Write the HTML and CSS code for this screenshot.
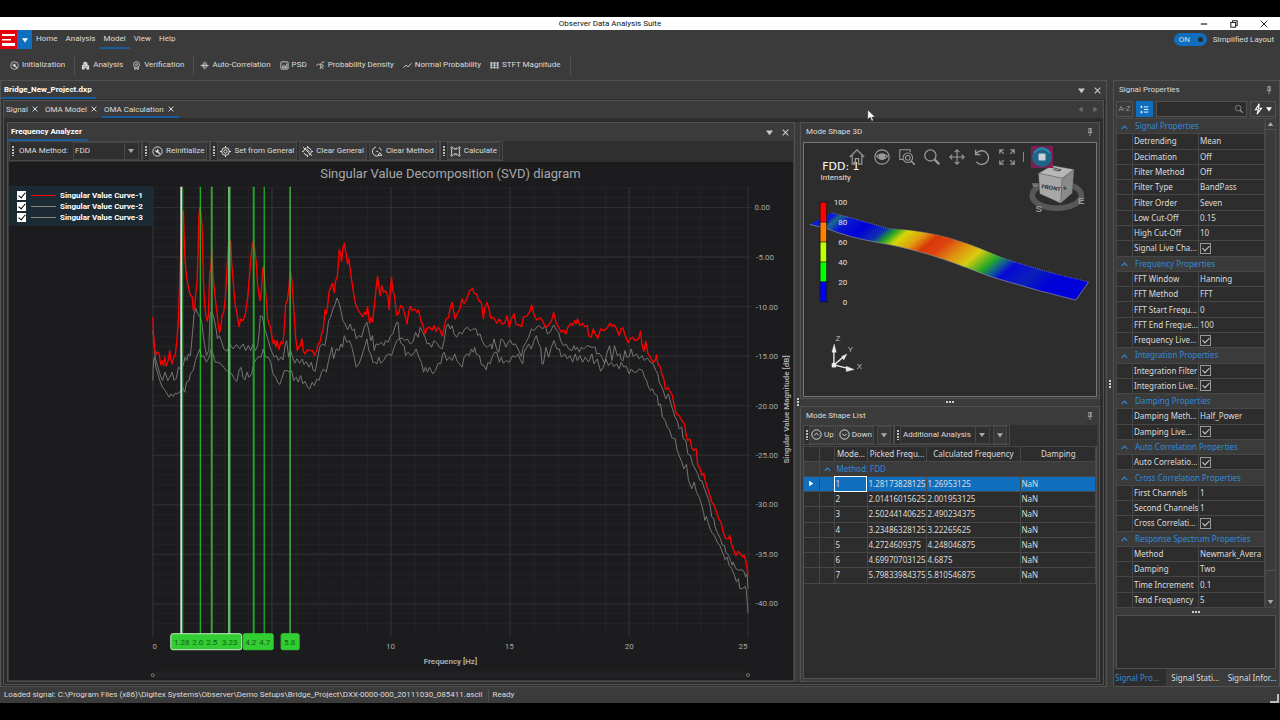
FILE: index.html
```html
<!DOCTYPE html>
<html lang="en">
<head>
    <meta charset="utf-8">
    <title>Observer Data Analysis Suite</title>
    <link rel="stylesheet" href="styles.css">
</head>
<body>
    <!-- Shared icons -->
    <svg class="defs" width="0" height="0">
        <symbol id="i-wrench" viewBox="0 0 20 20"><circle cx="10" cy="10" r="8.5" fill="none" stroke="currentColor" stroke-width="1.7"/><path d="M15 15 9.5 9.5" stroke="currentColor" stroke-width="2.5"/><path d="M6 6v4l2 2h3l1-2V7l-2-2-1 3-2 0z" fill="currentColor"/></symbol>
        <symbol id="i-building" viewBox="0 0 20 20"><path d="M2 19V9h3V4l4-3 5 3v4l4 2v9h-6v-4H8v4z" fill="currentColor"/><path d="M7 7h4M4 12h12" stroke="#3b3b3b" stroke-width="1.500" stroke-dasharray="2 1.500"/></symbol>
        <symbol id="i-badge" viewBox="0 0 20 20"><g fill="none" stroke="currentColor" stroke-width="1.800"><circle cx="10" cy="8" r="6.500"/><circle cx="10" cy="8" r="2"/><path d="M6 13v6l4-2 4 2v-6"/></g></symbol>
        <symbol id="i-wave" viewBox="0 0 20 20"><path d="M1 10h18M5 7v6M8 3v14M11 1v18M14 4v12M17 8v4" stroke="currentColor" stroke-width="1.500"/></symbol>
        <symbol id="i-psd" viewBox="0 0 20 20"><g fill="none" stroke="currentColor" stroke-width="1.800"><rect x="2" y="2" width="16" height="16" rx="1"/><path d="M6 14v-4M9 14V8M12 14v-3M15 14V6M5 15h11"/></g></symbol>
        <symbol id="i-density" viewBox="0 0 20 20"><g fill="none" stroke="currentColor" stroke-width="1.700"><path d="m1 11 4-5 4 3 4-6 6-1"/><circle cx="13" cy="11" r="3"/><path d="m9 18 2-5m3 2 2 3"/></g></symbol>
        <symbol id="i-line" viewBox="0 0 20 20"><path d="m1 15 6-6 4 4 8-8" fill="none" stroke="currentColor" stroke-width="2"/></symbol>
        <symbol id="i-grid" viewBox="0 0 20 20"><path d="M3 2v16M10 2v16M17 2v16" stroke="currentColor" stroke-width="4" stroke-dasharray="4 1"/><path d="M3 6h14M3 14h14" stroke="currentColor"/></symbol>
        <symbol id="i-target" viewBox="0 0 20 20"><g fill="none" stroke="currentColor" stroke-width="1.800"><circle cx="10" cy="10" r="7"/><circle cx="10" cy="10" r="3"/><path d="M10 0v4M10 16v4M0 10h4M16 10h4"/></g></symbol>
        <symbol id="i-notarget" viewBox="0 0 20 20"><g fill="none" stroke="currentColor" stroke-width="1.800"><circle cx="10" cy="10" r="7" stroke-dasharray="8 3"/><path d="m2 2 16 16M10 0v4M10 16v4M0 10h3M17 10h3M8 5l6 6"/></g></symbol>
        <symbol id="i-clear" viewBox="0 0 20 20"><g fill="none" stroke="currentColor" stroke-width="1.800"><path d="M7 2a8 8 0 0 0 4 16M13 3a8 8 0 0 1 4 5M8 10h3M11 17l3-5 4 5z"/></g></symbol>
        <symbol id="i-calc" viewBox="0 0 20 20"><g fill="none" stroke="currentColor" stroke-width="1.700"><circle cx="3" cy="3" r="1.500"/><circle cx="17" cy="3" r="1.500"/><circle cx="3" cy="17" r="1.500"/><circle cx="17" cy="17" r="1.500"/><path d="M3 5v10M17 5v10M6 4h3v3M14 4h-3v3M6 16h3v-3M14 16h-3v-3"/></g></symbol>
        <symbol id="i-up" viewBox="0 0 20 20"><g fill="none" stroke="currentColor" stroke-width="1.800"><circle cx="10" cy="10" r="8.500"/><path d="m6 11.500 4-4 4 4"/></g></symbol>
        <symbol id="i-down" viewBox="0 0 20 20"><g fill="none" stroke="currentColor" stroke-width="1.800"><circle cx="10" cy="10" r="8.500"/><path d="m6 8.500 4 4 4-4"/></g></symbol>
        <symbol id="i-x" viewBox="0 0 10 10"><path d="m1 1 8 8M9 1 1 9" fill="none" stroke="currentColor" stroke-width="1.600"/></symbol>
        <symbol id="i-tri" viewBox="0 0 10 10"><path d="M0 2h10L5 9z" fill="currentColor"/></symbol>
        <symbol id="i-pin" viewBox="0 0 10 14"><path d="M2 1h6M3 1v7M7 1v7M6 1v7M1 8h8M5 8v6" fill="none" stroke="currentColor" stroke-width="1.400"/></symbol>
        <symbol id="i-home" viewBox="0 0 20 20"><path d="m1 10 9-9 9 9M4 8v11h4v-7h4v7h4V8" fill="none" stroke="currentColor" stroke-width="1.500"/></symbol>
        <symbol id="i-eye" viewBox="0 0 20 20"><circle cx="10" cy="10" r="9" fill="none" stroke="currentColor" stroke-width="1.500"/><path d="M3 9q7-5 14 0-7 8-14 0" fill="none" stroke="currentColor" stroke-width="1.500"/><circle cx="10" cy="9.500" r="4" fill="currentColor"/></symbol>
        <symbol id="i-zoombox" viewBox="0 0 20 20"><g fill="none" stroke="currentColor" stroke-width="1.300"><path d="M5 13H1V1h13v3"/><circle cx="11" cy="11" r="6"/><circle cx="11" cy="11" r="3"/><path d="m15 15 5 5" stroke-width="2"/></g></symbol>
        <symbol id="i-search" viewBox="0 0 20 20"><g fill="none" stroke="currentColor"><circle cx="8" cy="8" r="7" stroke-width="1.600"/><path d="m13 13 6 6" stroke-width="3"/></g></symbol>
        <symbol id="i-move" viewBox="0 0 20 20"><path d="M10 1v18M1 10h18M7 4l3-3 3 3M7 16l3 3 3-3M4 7l-3 3 3 3M16 7l3 3-3 3" fill="none" stroke="currentColor" stroke-width="1.400"/></symbol>
        <symbol id="i-rotate" viewBox="0 0 20 20"><path d="M2 1v6h6M2 7a8.500 8.500 0 1 1 1 9" fill="none" stroke="currentColor" stroke-width="1.700"/></symbol>
        <symbol id="i-expand" viewBox="0 0 20 20"><path d="M1 6V1h5M1 1l5 5M14 1h5v5M19 1l-5 5M1 14v5h5M1 19l5-5M14 19h5v-5M19 19l-5-5" fill="none" stroke="currentColor" stroke-width="1.500"/></symbol>
        <symbol id="i-stop" viewBox="0 0 22 22"><path d="M0 0h22v22H0z" fill="#7c1f52"/><circle cx="11" cy="11" r="10" fill="#1d6687"/><path d="M3 7q8-9 16 0" fill="none" stroke="#2b88ae" stroke-width="2"/><rect x="7.500" y="7.500" width="7" height="7" rx="1" fill="#c9d3d8"/></symbol>
        <symbol id="i-bolt" viewBox="0 0 12 16"><path d="M7 1 2 9h4l-2 6 6-8H6z" fill="none" stroke="currentColor" stroke-width="1.500"/></symbol>
        <symbol id="i-cats" viewBox="0 0 14 14"><path d="M6 3h7M6 7h7M6 11h7M4 3H1M4 11H1M2 1v4M2 9v4" fill="none" stroke="currentColor" stroke-width="1.400"/></symbol>
        <symbol id="i-chev" viewBox="0 0 10 10"><path d="m1 7 4-4 4 4" fill="none" stroke="currentColor" stroke-width="1.600"/></symbol>
    </svg>

    <header class="titlebar">
        <span class="title">Observer Data Analysis Suite</span>
        <div class="window-buttons">
            <button aria-label="Minimize"><svg viewBox="0 0 10 10"><path d="M1 5h8" stroke="#222" stroke-width="1.500"/></svg></button>
            <button aria-label="Restore"><svg viewBox="0 0 10 10"><path d="M1 3h6v6H1zM3 3V1h6v6H7" fill="none" stroke="#222" stroke-width="1.300"/></svg></button>
            <button aria-label="Close"><svg viewBox="0 0 10 10"><path d="m1 1 8 8M9 1 1 9" stroke="#222" stroke-width="1.200"/></svg></button>
        </div>
    </header>

    <nav class="menu">
        <button class="logo" aria-label="Application menu">
            <svg class="logo-mark" viewBox="0 0 17 19"><path d="M0 0h17v19H0z" fill="#e8000b"/><path d="M2 4h13v2H2zM2 9h9v1.500H2zM2 13h13v3H2z" fill="#fff"/></svg>
            <svg class="logo-arrow"><use href="#i-tri"/></svg>
        </button>
        <a href="#">Home</a>
        <a href="#">Analysis</a>
        <a href="#" class="active">Model</a>
        <a href="#">View</a>
        <a href="#">Help</a>
        <label class="toggle"><input type="checkbox" checked><span class="switch">ON</span>Simplified Layout</label>
    </nav>

    <div class="ribbon">
        <button><svg><use href="#i-wrench"/></svg>Initialization</button>
        <i class="sep"></i>
        <button><svg><use href="#i-building"/></svg>Analysis</button>
        <button><svg><use href="#i-badge"/></svg>Verification</button>
        <i class="sep"></i>
        <button><svg><use href="#i-wave"/></svg>Auto-Correlation</button>
        <button><svg><use href="#i-psd"/></svg>PSD</button>
        <button><svg><use href="#i-density"/></svg>Probability Density</button>
        <button><svg><use href="#i-line"/></svg>Normal Probability</button>
        <button><svg><use href="#i-grid"/></svg>STFT Magnitude</button>
        <i class="sep"></i>
    </div>

    <main class="workspace">
        <section class="document">
            <div class="doc-head">
                <h1>Bridge_New_Project.dxp</h1>
                <button class="push" aria-label="Documents"><svg><use href="#i-tri"/></svg></button>
                <button aria-label="Close document"><svg><use href="#i-x"/></svg></button>
            </div>
            <div class="inner">
                <div class="tabs">
                    <div class="tab"><a href="#">Signal</a><button aria-label="Close Signal"><svg><use href="#i-x"/></svg></button></div>
                    <div class="tab"><a href="#">OMA Model</a><button aria-label="Close OMA Model"><svg><use href="#i-x"/></svg></button></div>
                    <div class="tab active"><a href="#">OMA Calculation</a><button aria-label="Close OMA Calculation"><svg><use href="#i-x"/></svg></button></div>
                    <span class="tab-arrows"><svg viewBox="0 0 10 10"><path d="M8 1v8L2 5z" fill="#6b6b6b"/></svg><svg viewBox="0 0 10 10"><path d="M2 1v8l6-4z" fill="#6b6b6b"/></svg></span>
                </div>
                <div class="panes">
                    <section class="pane analyzer">
                        <div class="pane-head">
                            <h2 class="active">Frequency Analyzer</h2>
                            <button class="push" aria-label="Panes"><svg><use href="#i-tri"/></svg></button>
                            <button aria-label="Close pane"><svg><use href="#i-x"/></svg></button>
                        </div>
                        <div class="toolbar">
                            <div class="group">
                                <i class="grip"></i>
                                <label for="method">OMA Method:</label>
                                <span class="combo method"><select id="method"><option>FDD</option></select></span>
                            </div>
                            <div class="group"><i class="grip"></i><button><svg><use href="#i-wrench"/></svg>Reinitialize</button></div>
                            <div class="group">
                                <i class="grip"></i>
                                <button><svg><use href="#i-target"/></svg>Set from General</button>
                                <button><svg><use href="#i-notarget"/></svg>Clear General</button>
                                <button><svg><use href="#i-clear"/></svg>Clear Method</button>
                            </div>
                            <div class="group"><i class="grip"></i><button><svg><use href="#i-calc"/></svg>Calculate</button></div>
                        </div>
                        <div class="chart">
                            <svg class="plot" viewBox="9 162 785 517">
                                <defs>
                                    <pattern id="minor" x="153" y="186.400" width="23.840" height="9.920" patternUnits="userSpaceOnUse"><path d="M0 0V10M0 0H24" stroke="#29292b"/></pattern>
                                    <pattern id="major" x="152.500" y="206.300" width="119.200" height="49.600" patternUnits="userSpaceOnUse"><path d="M.5 0V50M0 .5H120" stroke="#303032"/></pattern>
                                </defs>
                                <text x="451" y="177" class="chart-title">Singular Value Decomposition (SVD) diagram</text>
                                <rect x="153" y="186" width="596" height="447" fill="url(#minor)"/>
                                <rect x="152" y="186" width="600" height="451" fill="url(#major)"/>
                                <rect x="153" y="671" width="596" height="7" fill="#212123"/>

                                <!-- SVD curves, drawn on a third-of-a-pixel grid in three frequency bands -->
                                <g class="curves">
                                    <g transform="translate(140 180) scale(.33333)">
                                        <polyline class="s2" points="39,600 41,540 44,530 48,560 54,580 60,600 68,620 76,630 82,640 88,650 94,640 100,648 106,638 112,640 120,635 128,620 135,635 140,605 148,600 152,580 160,570 167,540 172,525 180,505 186,530 192,525 200,545 208,530 214,505 220,520 226,545 234,545 244,550 252,560 260,570 268,575 276,580 284,595 291,603 298,570 304,560 310,590 316,598 322,575 328,590 336,580 342,550 350,535 358,528 364,530 371,505 378,530 386,530 393,545 400,580 408,590 414,605 420,612 428,590 434,570 442,570 450,575 456,570 462,600 470,590 476,605 483,585 490,610 496,602 504,620 510,625 518,605 524,615 532,595 538,600 546,575 552,565 560,575 566,545 572,520 577,500 582,535 590,505 598,510 604,490 609,500 614,465 622,485 630,480 637,500 644,530 650,560 658,550 664,535 672,510 682,475 688,510 694,520 700,545 706,545 712,550 718,530 724,548 732,540 740,525 748,520 756,525 764,500 772,480 780,475 786,490 794,495 798,525 806,515 814,525 822,520 830,505 838,530 846,545 852,575 858,560 864,575 870,560 880,580 888,570 896,548 904,550 910,520 914,515 922,540 930,530 938,540 946,520 952,540 960,550"/>
                                        <polyline class="s2" points="39,450 43,490 46,530 53,555 60,580 68,600 76,575 84,600 90,590 97,575 103,600 110,592 116,560 123,565 130,555 136,530 141,540 146,520 152,525 158,460 163,400 168,383 174,400 182,410 187,430 191,470 196,500 200,525 207,510 211,400 216,392 222,410 229,445 233,475 239,465 246,485 252,505 262,512 270,490 280,505 290,492 300,505 310,490 318,510 326,495 333,510 340,490 347,510 354,495 358,460 362,405 368,408 374,440 380,460 386,480 391,500 397,515 404,530 410,525 416,540 424,530 430,538 437,490 441,480 447,530 453,510 459,530 465,548 472,535 480,548 488,535 493,552 500,543 508,560 515,545 521,570 527,572 533,540 540,500 548,490 556,495 562,460 567,420 573,410 580,385 587,370 592,352 598,365 604,390 610,420 617,430 624,448 632,430 638,450 644,445 650,475 658,465 666,470 674,440 682,425 688,450 694,480 699,465 704,510 710,490 718,492 726,485 733,495 738,480 746,485 752,468 760,460 766,440 772,425 776,426 780,475 788,472 796,480 804,475 812,490 820,485 828,455 836,470 842,440 850,455 857,470 863,490 870,488 876,500 884,480 893,488 900,500 908,505 914,480 920,440 926,430 932,445 938,435 944,460 952,470 960,455"/>
                                        <polyline class="s1" points="39,410 41,455 44,500 48,522 53,514 58,520 63,553 67,540 71,555 75,530 79,556 84,545 90,510 93,535 97,550 102,532 107,520 112,470 116,420 120,290 123,205 127,95 131,92 134,200 136,240 140,290 146,320 152,345 157,348 161,390 165,378 168,340 172,300 175,220 177,110 180,80 184,100 187,140 189,220 191,300 194,360 198,405 203,422 206,400 210,275 213,268 216,205 220,290 226,350 231,390 235,425 239,457 243,440 247,405 252,395 257,350 261,280 264,230 267,182 273,182 276,250 281,310 286,370 292,400 298,438 303,415 310,420 317,400 324,350 329,290 334,230 338,190 341,182 346,210 350,250 354,315 361,360 365,330 369,265 372,258 376,310 381,370 384,415 388,430 393,440 397,470 401,490 405,480 409,500 412,480 418,507 424,483 430,490 434,440 438,370 443,360 447,330 452,270 457,300 460,350 464,410 468,470 473,510 478,498 482,495 487,475 491,512 496,520 503,508 510,510 518,510 525,524 531,510 536,490 541,485 546,460 551,445 556,388 560,400 564,375 568,335 573,322 578,308 584,335 588,300 593,290 597,240 599,206 603,218 606,242 610,200 614,188 619,215 624,250 628,235 633,275 638,310 644,350 649,375 656,388 663,400 670,408 675,395 680,402 684,377 690,428 694,410 699,425 704,380 710,320 714,287 718,320 722,345 727,315 732,335 738,330 745,345 749,388 753,320 756,290 760,330 765,345 771,403 777,400 783,375 790,380 797,405 803,430 808,390 813,377 818,390 825,385 832,395 837,388 844,420 849,430 853,445 857,460 862,443 870,440 878,448 884,435 890,452 897,440 903,450 908,466 914,440 920,415 927,412 932,385 938,365 942,390 947,415 953,400 960,388"/>
                                    </g>
                                    <g transform="translate(460 220) scale(.33333)">
                                        <polyline class="s2" points="0,430 8,440 14,410 22,400 30,405 36,385 42,395 46,380 50,400 60,405 66,432 74,435 80,448 86,425 92,430 100,405 106,395 112,395 120,425 126,410 132,428 140,420 150,425 160,405 168,410 176,400 184,420 190,430 194,395 200,385 208,370 216,385 224,360 231,345 238,370 244,380 248,430 252,430 260,380 268,410 276,380 284,360 292,385 300,385 306,410 316,400 324,415 332,405 340,425 348,400 354,420 362,405 370,425 378,410 388,425 398,400 404,430 414,415 424,452 432,440 440,415 448,435 456,425 464,438 472,430 480,445 486,425 494,440 500,435 510,460 516,445 524,455 532,455 540,445 550,450 556,470 562,480 568,500 574,510 580,505 586,520 594,525 598,555 604,550 610,590 618,600 624,620 630,625 638,652 648,655 654,690 660,705 668,725 674,745 682,732 688,780"/>
                                        <polyline class="s2" points="0,335 8,340 16,325 24,320 32,330 42,325 50,325 55,345 62,340 68,360 76,375 84,380 94,370 98,385 104,355 112,385 118,395 125,355 132,360 140,380 146,365 152,358 160,372 168,370 176,385 186,408 192,380 200,365 208,350 216,325 224,330 232,320 240,315 250,325 258,315 264,340 272,335 283,313 292,330 298,335 304,360 312,375 320,370 328,385 338,390 344,375 348,388 354,380 360,395 366,380 374,385 384,375 396,380 408,380 412,400 420,398 428,410 436,428 444,395 451,375 458,420 466,375 474,405 482,400 486,418 492,420 497,390 503,410 510,408 516,385 522,408 532,400 540,415 548,405 556,420 564,412 574,425 582,430 590,450 596,460 600,485 606,495 612,510 620,535 628,520 634,545 640,565 648,590 654,600 660,625 668,620 672,655 680,660 686,700 694,705 700,730 710,750 716,760 722,780 728,780"/>
                                        <polyline class="s1" points="0,270 8,235 14,250 22,235 30,212 40,203 44,218 52,220 58,240 66,245 72,295 76,262 83,245 88,262 94,292 104,292 112,308 120,295 128,310 136,308 143,285 150,320 156,295 164,280 170,312 178,312 187,318 193,288 202,287 212,272 217,253 224,282 232,298 242,292 250,300 258,320 264,318 272,308 277,300 283,275 290,305 298,320 306,335 312,328 319,340 326,320 334,308 340,315 346,300 350,310 355,295 362,315 370,308 376,318 384,315 388,345 396,350 402,325 408,340 416,353 424,325 434,330 444,322 452,308 458,318 464,312 472,325 480,345 485,325 491,322 498,345 506,366 513,355 520,350 528,360 538,355 544,332 548,370 554,392 560,362 566,398 574,412 582,425 588,420 592,402 596,430 604,440 608,460 614,475 619,507 626,500 634,515 640,525 646,560 652,580 660,585 668,600 676,610 682,650 686,660 692,655 698,682 704,690 711,685 716,735 722,742 728,765 734,758 738,780"/>
                                    </g>
                                    <g transform="translate(640 480) scale(.33333)">
                                        <polyline class="s2" points="148,0 158,25 165,5 172,35 182,55 188,75 194,100 197,120 202,108 208,130 215,150 220,160 226,165 234,185 242,195 250,215 258,238 264,230 270,255 278,265 286,285 292,305 298,295 302,325 310,325 318,318 322,330 325,370 327,398"/>
                                        <polyline class="s2" points="188,0 196,25 204,45 212,70 218,110 224,115 228,140 236,160 244,175 250,195 256,195 260,215 268,225 274,240 280,255 282,245 290,265 298,270 306,268 314,272 320,290 324,280 327,325"/>
                                        <polyline class="s1" points="198,0 206,25 212,45 218,65 224,72 232,95 240,118 247,128 252,155 260,175 268,175 272,165 277,190 284,210 291,226 297,213 304,220 310,230 315,225 320,240 324,265 327,282"/>
                                    </g>
                                </g>

                                <!-- Picked frequencies -->
                                <g class="picks">
                                    <path d="M181.500 186V634" stroke="#d8d8d8" stroke-width="2"/>
                                    <path d="M183 186V634" stroke="#2f9a36"/>
                                    <path d="M200.500 186V634" stroke="#22dd28"/>
                                    <path d="M212 186V634" stroke="#3d9c3f" stroke-width="2"/>
                                    <path d="M229.500 186V634" stroke="#62b865" stroke-width="2.500"/>
                                    <path d="M254 186V634" stroke="#25a32b" stroke-width="2"/>
                                    <path d="M264.500 186V634" stroke="#22dd28"/>
                                    <path d="M290.500 186V634" stroke="#3fae42" stroke-width="1.500"/>
                                </g>
                                <g fill="#32cd32" stroke="#32cd32">
                                    <path d="M173 633.500h67q2 0 2 2v12q0 2-2 2h-67q-2 0-2-2v-12q0-2 2-2z" stroke="#c9efc9"/>
                                    <rect x="243.500" y="633.500" width="30" height="16" rx="1.500"/>
                                    <rect x="281.500" y="633.500" width="18" height="16" rx="1.500"/>
                                </g>
                                <g class="pick-labels">
                                    <text x="182" y="645">1.28</text><text x="198" y="645">2.0</text><text x="212" y="645">2.5</text><text x="230" y="645">3.23</text>
                                    <text x="251" y="645">4.2</text><text x="265" y="645">4.7</text><text x="290" y="645">5.8</text>
                                </g>

                                <g class="axis">
                                    <text x="155" y="649">0</text><text x="391" y="649">10</text><text x="510" y="649">15</text><text x="630" y="649">20</text><text x="744" y="649">25</text>
                                </g>
                                <g class="axis y-axis">
                                    <text x="771" y="209">0.00</text><text x="775" y="259">-5.00</text><text x="779" y="309">-10.00</text><text x="779" y="358">-15.00</text><text x="779" y="408">-20.00</text><text x="779" y="458">-25.00</text><text x="779" y="507">-30.00</text><text x="779" y="557">-35.00</text><text x="779" y="606">-40.00</text>
                                </g>
                                <text class="axis-title" x="451" y="664">Frequency [Hz]</text>
                                <text class="axis-title" transform="translate(790 409) rotate(-90)">Singular Value Magnitude [dB]</text>
                                <g fill="none" stroke="#777"><circle cx="153" cy="675" r="1.500"/><circle cx="749" cy="675" r="1.500"/></g>
                            </svg>
                            <div class="legend">
                                <label><input type="checkbox" checked><i class="red"></i>Singular Value Curve-1</label>
                                <label><input type="checkbox" checked><i></i>Singular Value Curve-2</label>
                                <label><input type="checkbox" checked><i></i>Singular Value Curve-3</label>
                            </div>
                        </div>
                    </section>

                    <div class="splitter vertical"><i></i></div>

                    <div class="side">
                        <section class="pane shape">
                            <div class="pane-head"><h2>Mode Shape 3D</h2><button class="push pin" aria-label="Pin"><svg><use href="#i-pin"/></svg></button></div>
                            <div class="viewport">
                                <svg class="scene" viewBox="15 9 879 756">
                                    <defs>
                                        <linearGradient id="heat" gradientUnits="userSpaceOnUse" x1="154" y1="185" x2="570" y2="685">
                                            <stop offset="0" stop-color="#0a1ed0"/><stop offset=".02" stop-color="#1c6a8a"/><stop offset=".06" stop-color="#0818d0"/><stop offset=".13" stop-color="#0000d8"/><stop offset=".2" stop-color="#1030b0"/>
                                            <stop offset=".235" stop-color="#1fa02a"/><stop offset=".275" stop-color="#d4d808"/><stop offset=".33" stop-color="#e0a010"/><stop offset=".38" stop-color="#d83808"/><stop offset=".43" stop-color="#dc4410"/>
                                            <stop offset=".49" stop-color="#e08a10"/><stop offset=".56" stop-color="#d8cc10"/><stop offset=".63" stop-color="#28a828"/><stop offset=".67" stop-color="#106090"/><stop offset=".71" stop-color="#0808d8"/>
                                            <stop offset=".8" stop-color="#0a20b8"/><stop offset=".88" stop-color="#0000d8"/>
                                        </linearGradient>
                                    </defs>
                                    <path d="M32 252 98 217Q180 238 270 265C400 272 480 295 610 352Q740 396 872 425L833 480Q720 452 620 422C520 395 430 340 235 306Q150 291 85 265z" fill="url(#heat)"/>
                                    <path d="M98 217Q180 238 270 265C400 272 480 295 610 352Q740 396 872 425" fill="none" stroke="#aaa" stroke-width="2" stroke-dasharray="3 4"/>
                                    <path d="M872 425 833 480Q720 452 620 422C520 395 430 340 235 306Q150 291 85 265L32 252" fill="none" stroke="#999" stroke-width="2"/>
                                    <path d="M64 185h19v60H64z" fill="#f00"/><path d="M64 245h19v60H64z" fill="#ff8000"/><path d="M64 305h19v60H64z" fill="#bfff00"/><path d="M64 365h19v60H64z" fill="#0f0"/><path d="M64 425h19v60H64z" fill="#00f"/>
                                    <path d="M63 185h27M63 245h27M63 305h27M63 365h27M63 425h27M63 485h27M63 185v300M83 185v300" stroke="#111" stroke-width="2"/>
                                    <text x="70" y="87" class="shape-name">FDD: 1</text>
                                    <text x="65" y="119">Intensity</text>
                                    <g text-anchor="end"><text x="145" y="195">100</text><text x="145" y="255">80</text><text x="145" y="315">60</text><text x="145" y="375">40</text><text x="145" y="435">20</text><text x="145" y="495">0</text></g>
                                    <!-- View cube -->
                                    <ellipse cx="776" cy="165" rx="74" ry="38" fill="none" stroke="#585858" stroke-width="17"/>
                                    <g class="compass"><text x="712" y="214">S</text><text x="840" y="190">E</text><text x="702" y="138" class="far">W</text></g>
                                    <g stroke="#555"><path d="m721 98 41-23 66 12-36 26z" fill="#b8b8b8"/><path d="m721 98 71 15-4 75-63-28z" fill="#a8a8a8"/><path d="m792 113 36-26-6 71-34 30z" fill="#8a8a8a"/></g>
                                    <g class="cube-text"><text transform="translate(729 143) rotate(9)">FRONT</text><text transform="translate(762 89) rotate(12)" class="small">TOP</text><text transform="translate(799 149) rotate(-35)" class="small">R</text></g>
                                    <!-- Axis triad -->
                                    <g fill="#eee" stroke="#eee" stroke-width="4"><path d="M105 675v-50M105 675l30-25M105 675l45 11"/><path d="m99 637 7-25 6 25zM128 650l16-8-9 18zM142 679l24 10-24 6zM99 670h12v12H99z" stroke-width="1"/></g>
                                    <g class="triad"><text x="110" y="604">Z</text><text x="147" y="636">Y</text><text x="174" y="688">X</text></g>
                                </svg>
                                <div class="view-tools">
                                    <button aria-label="Home"><svg><use href="#i-home"/></svg></button>
                                    <button aria-label="View"><svg><use href="#i-eye"/></svg></button>
                                    <button aria-label="Zoom window"><svg><use href="#i-zoombox"/></svg></button>
                                    <button aria-label="Zoom"><svg><use href="#i-search"/></svg></button>
                                    <button aria-label="Pan"><svg><use href="#i-move"/></svg></button>
                                    <button aria-label="Rotate"><svg><use href="#i-rotate"/></svg></button>
                                    <button aria-label="Fit"><svg><use href="#i-expand"/></svg></button>
                                    <i></i>
                                    <button class="stop" aria-label="Stop"><svg><use href="#i-stop"/></svg></button>
                                </div>
                            </div>
                        </section>
                        <div class="splitter horizontal"><i></i></div>
                        <section class="pane list">
                            <div class="pane-head"><h2>Mode Shape List</h2><button class="push pin" aria-label="Pin"><svg><use href="#i-pin"/></svg></button></div>
                            <div class="toolbar">
                                <div class="group">
                                    <i class="grip"></i>
                                    <button><svg><use href="#i-up"/></svg>Up</button>
                                    <button><svg><use href="#i-down"/></svg>Down</button>
                                    <button class="more" aria-label="More"><svg><use href="#i-tri"/></svg></button>
                                </div>
                                <div class="group">
                                    <i class="grip"></i>
                                    <span class="combo analysis"><select aria-label="Analysis"><option>Additional Analysis</option></select></span>
                                    <button class="more" aria-label="More"><svg><use href="#i-tri"/></svg></button>
                                </div>
                            </div>
                            <div class="modes-box">
                                <table class="modes">
                                    <colgroup><col class="c-mark"><col class="c-mark"><col class="c-mode"><col class="c-picked"><col class="c-calc"><col></colgroup>
                                    <thead><tr><th></th><th></th><th>Mode...</th><th>Picked Frequ...</th><th>Calculated Frequency</th><th>Damping</th></tr></thead>
                                    <tbody>
                                        <tr class="method"><td></td><td colspan="5"><svg><use href="#i-chev"/></svg>Method: FDD</td></tr>
                                        <tr class="selected"><td><svg viewBox="0 0 10 10"><path d="M3 1v8l6-4z" fill="#fff"/></svg></td><td></td><td>1</td><td>1.28173828125</td><td>1.26953125</td><td>NaN</td></tr>
                                        <tr><td></td><td></td><td>2</td><td>2.01416015625</td><td>2.001953125</td><td>NaN</td></tr>
                                        <tr><td></td><td></td><td>3</td><td>2.50244140625</td><td>2.490234375</td><td>NaN</td></tr>
                                        <tr><td></td><td></td><td>4</td><td>3.23486328125</td><td>3.22265625</td><td>NaN</td></tr>
                                        <tr><td></td><td></td><td>5</td><td>4.2724609375</td><td>4.248046875</td><td>NaN</td></tr>
                                        <tr><td></td><td></td><td>6</td><td>4.69970703125</td><td>4.6875</td><td>NaN</td></tr>
                                        <tr><td></td><td></td><td>7</td><td>5.79833984375</td><td>5.810546875</td><td>NaN</td></tr>
                                    </tbody>
                                </table>
                            </div>
                        </section>
                    </div>
                </div>
            </div>
        </section>

        <div class="splitter vertical outer"><i></i></div>

        <aside class="properties">
            <div class="pane-head"><h2>Signal Properties</h2><button class="push pin" aria-label="Pin"><svg><use href="#i-pin"/></svg></button></div>
            <div class="prop-tools">
                <button class="az">A-Z</button>
                <button class="cats" aria-label="Categorized"><svg><use href="#i-cats"/></svg></button>
                <span class="search"><input type="text" aria-label="Search"><svg><use href="#i-search"/></svg></span>
                <button class="bolt" aria-label="Actions"><svg><use href="#i-bolt"/></svg><svg class="arrow"><use href="#i-tri"/></svg></button>
            </div>
            <div class="grid">
                <table class="props">
                    <colgroup><col class="c-exp"><col class="c-name"><col></colgroup>
                    <tr class="cat"><th colspan="3"><svg><use href="#i-chev"/></svg>Signal Properties</th></tr>
                    <tr><td></td><td>Detrending</td><td>Mean</td></tr>
                    <tr><td></td><td>Decimation</td><td>Off</td></tr>
                    <tr><td></td><td>Filter Method</td><td>Off</td></tr>
                    <tr><td></td><td>Filter Type</td><td>BandPass</td></tr>
                    <tr><td></td><td>Filter Order</td><td>Seven</td></tr>
                    <tr><td></td><td>Low Cut-Off</td><td>0.15</td></tr>
                    <tr><td></td><td>High Cut-Off</td><td>10</td></tr>
                    <tr><td></td><td>Signal Live Cha...</td><td><input type="checkbox" aria-label="Signal Live Change" checked></td></tr>
                    <tr class="cat"><th colspan="3"><svg><use href="#i-chev"/></svg>Frequency Properties</th></tr>
                    <tr><td></td><td>FFT Window</td><td>Hanning</td></tr>
                    <tr><td></td><td>FFT Method</td><td>FFT</td></tr>
                    <tr><td></td><td>FFT Start Frequ...</td><td>0</td></tr>
                    <tr><td></td><td>FFT End Freque...</td><td>100</td></tr>
                    <tr><td></td><td>Frequency Live...</td><td><input type="checkbox" aria-label="Frequency Live" checked></td></tr>
                    <tr class="cat"><th colspan="3"><svg><use href="#i-chev"/></svg>Integration Properties</th></tr>
                    <tr><td></td><td>Integration Filter</td><td><input type="checkbox" aria-label="Integration Filter" checked></td></tr>
                    <tr><td></td><td>Integration Live...</td><td><input type="checkbox" aria-label="Integration Live" checked></td></tr>
                    <tr class="cat"><th colspan="3"><svg><use href="#i-chev"/></svg>Damping Properties</th></tr>
                    <tr><td></td><td>Damping Meth...</td><td>Half_Power</td></tr>
                    <tr><td></td><td>Damping Live...</td><td><input type="checkbox" aria-label="Damping Live" checked></td></tr>
                    <tr class="cat"><th colspan="3"><svg><use href="#i-chev"/></svg>Auto Correlation Properties</th></tr>
                    <tr><td></td><td>Auto Correlatio...</td><td><input type="checkbox" aria-label="Auto Correlation" checked></td></tr>
                    <tr class="cat"><th colspan="3"><svg><use href="#i-chev"/></svg>Cross Correlation Properties</th></tr>
                    <tr><td></td><td>First Channels</td><td>1</td></tr>
                    <tr><td></td><td>Second Channels</td><td>1</td></tr>
                    <tr><td></td><td>Cross Correlati...</td><td><input type="checkbox" aria-label="Cross Correlation" checked></td></tr>
                    <tr class="cat"><th colspan="3"><svg><use href="#i-chev"/></svg>Response Spectrum Properties</th></tr>
                    <tr><td></td><td>Method</td><td>Newmark_Avera</td></tr>
                    <tr><td></td><td>Damping</td><td>Two</td></tr>
                    <tr><td></td><td>Time Increment</td><td>0.1</td></tr>
                    <tr><td></td><td>Tend Frequency</td><td>5</td></tr>
                </table>
                <div class="scroll">
                    <svg viewBox="0 0 10 10"><path d="M1 8h8L5 2z" fill="#aaa"/></svg>
                    <i></i>
                    <svg viewBox="0 0 10 10"><path d="M1 2h8L5 8z" fill="#aaa"/></svg>
                </div>
            </div>
            <div class="splitter horizontal"><i></i></div>
            <div class="description"></div>
            <div class="bottom-tabs">
                <a href="#" class="active">Signal Pro...</a>
                <a href="#">Signal Stati...</a>
                <a href="#">Signal Infor...</a>
            </div>
        </aside>
    </main>

    <footer class="status">
        <span>Loaded signal: C:\Program Files (x86)\Digitex Systems\Observer\Demo Setups\Bridge_Project\DXX-0000-000_20111030_085411.ascii</span>
        <span>Ready</span>
        <svg class="resize" viewBox="0 0 9 9"><path d="M8 0v8H0" fill="none" stroke="#bbb" stroke-width="2"/></svg>
    </footer>

    <svg class="pointer" viewBox="0 0 10 16"><path d="M1 1v12l3-3 2 5 2-1-2-4h4z" fill="#fff" stroke="#222" stroke-width=".5"/></svg>
</body>
</html>
```

FILE: styles.css
```css
* {
    box-sizing: border-box;
}
body {
    margin: 0;
    padding: 17px 0;
    height: 100vh;
    display: flex;
    flex-direction: column;
    overflow: hidden;
    background: #000;
    color: #dcdcdc;
    font: 8px/12px Roboto, "Noto Sans", sans-serif;
}
button, select, input {
    margin: 0;
    padding: 0;
    border: none;
    background: none;
    color: inherit;
    font: inherit;
}
button {
    display: flex;
    align-items: center;
    white-space: nowrap;
}
a {
    color: inherit;
    text-decoration: none;
}
h1, h2 {
    margin: 0;
    font-size: 8px;
    font-weight: normal;
}
svg {
    display: block;
    flex: none;
}
.defs {
    position: absolute;
}
.push {
    margin-left: auto;
}

/* Title bar, menu, ribbon */
.titlebar {
    display: flex;
    align-items: center;
    height: 13px;
    padding-right: 12px;
    background: #fff;
    color: #111;
}
.title {
    flex: 1;
    padding-left: 20px;
    text-align: center;
}
.window-buttons {
    display: flex;
    gap: 22px;
}
.window-buttons svg {
    width: 8px;
    height: 8px;
}
.menu {
    display: flex;
    height: 19px;
    background: #3b3b3b;
}
.logo {
    width: 32px;
    background: #106ebe;
}
.logo-mark {
    width: 17px;
    height: 19px;
}
.logo-arrow {
    width: 6px;
    height: 6px;
    margin-left: 5px;
    color: #fff;
}
.menu a {
    padding: 3px 4px 0;
    border-bottom: 2px solid transparent;
}
.menu a.active {
    border-color: #185c9c;
}
.toggle {
    display: flex;
    align-items: center;
    gap: 6px;
    margin-left: auto;
    padding-right: 6px;
}
.toggle input {
    position: absolute;
    opacity: 0;
}
.switch {
    position: relative;
    width: 33px;
    height: 13px;
    padding-left: 5px;
    border-radius: 7px;
    background: #106ebe;
    line-height: 13px;
}
.switch::after {
    content: "";
    position: absolute;
    right: 4px;
    top: 4px;
    width: 5px;
    height: 5px;
    border-radius: 50%;
    background: #2b2b2b;
}
.ribbon {
    display: flex;
    align-items: center;
    gap: 9px;
    height: 31px;
    padding: 1px 0 0 10px;
    background: #3b3b3b;
}
.ribbon button {
    gap: 3px;
}
.ribbon svg {
    width: 9px;
    height: 9px;
}
.sep {
    width: 1px;
    height: 20px;
    margin-right: -3px;
    background: #515151;
}

/* Docking */
.workspace {
    flex: 1;
    min-height: 0;
    display: flex;
    background: #3b3b3b;
}
.document {
    flex: 1;
    min-width: 0;
    display: flex;
    flex-direction: column;
    padding: 0 2px 1px;
    border: 1px solid #525252;
}
.doc-head {
    display: flex;
    align-items: center;
    gap: 9px;
    height: 18px;
    margin-bottom: 1px;
    padding-right: 3px;
}
.doc-head h1 {
    align-self: stretch;
    margin-left: -2px;
    padding: 3px 4px 0 3px;
    border-bottom: 2px solid #185c9c;
    color: #fff;
    font-weight: bold;
}
.doc-head svg, .pane-head svg {
    width: 7px;
    height: 7px;
    color: #c8c8c8;
}
.inner {
    flex: 1;
    min-height: 0;
    display: flex;
    flex-direction: column;
    border: 1px solid #525252;
    outline: 1px solid #2b2b2b;
}
.tabs {
    display: flex;
    height: 17px;
}
.tab {
    display: flex;
    gap: 4px;
    padding: 0 5px 0 2px;
    line-height: 17px;
    border-bottom: 2px solid transparent;
}
.tab.active {
    border-color: #185c9c;
}
.tab svg {
    width: 6px;
    height: 6px;
}
.tab-arrows {
    display: flex;
    align-items: center;
    gap: 8px;
    margin-left: auto;
    padding-right: 4px;
}
.tab-arrows svg {
    width: 7px;
    height: 7px;
}
.panes {
    flex: 1;
    min-height: 0;
    display: flex;
    padding: 4px 3px 2px;
    background: #2d2d2d;
}
.pane {
    display: flex;
    flex-direction: column;
    min-height: 0;
    border: 1px solid #525252;
    background: #3b3b3b;
}
.analyzer {
    flex: 1;
    min-width: 0;
    padding: 0 1px 1px;
}
.pane-head {
    display: flex;
    align-items: center;
    gap: 9px;
    height: 18px;
    padding-right: 4px;
}
.pane-head h2 {
    align-self: stretch;
    padding: 3px 6px 0 3px;
    border-bottom: 2px solid transparent;
}
.pane-head h2.active {
    margin-left: -1px;
    border-color: #185c9c;
    color: #fff;
    font-weight: bold;
}
.pane-head .pin svg {
    width: 6px;
    height: 8px;
    color: #aaa;
}
.splitter {
    flex: none;
    display: flex;
    align-items: center;
    justify-content: center;
    background: #3b3b3b;
}
.splitter.vertical {
    width: 5px;
}
.splitter.outer {
    width: 6px;
}
.splitter.horizontal {
    height: 7px;
}
.splitter i {
    width: 2px;
    height: 8px;
    background: repeating-linear-gradient(#ccc 0 2px, transparent 2px 3px);
}
.splitter.horizontal i {
    width: 8px;
    height: 2px;
    background: repeating-linear-gradient(90deg, #ccc 0 2px, transparent 2px 3px);
}

/* Toolbars */
.toolbar {
    display: flex;
    height: 21px;
    background: #2f2f2f;
}
.group {
    display: flex;
    align-items: center;
    gap: 2px;
    height: 20px;
    padding: 0 2px;
    border: 1px solid #4a4a4a;
}
.grip {
    width: 2px;
    height: 10px;
    background: repeating-linear-gradient(#bbb 0 2px, transparent 2px 3px);
}
.group label {
    padding: 0 3px;
}
.group button {
    gap: 3px;
    height: 18px;
    padding: 0 2px;
    border: 1px solid #464646;
    background: #383838;
}
.group svg {
    width: 11px;
    height: 11px;
}
.group .more {
    padding: 0 3px;
}
.group .more svg {
    width: 6px;
    height: 6px;
    color: #aaa;
}
.combo {
    position: relative;
    border: 1px solid #444;
}
.combo select {
    display: block;
    width: 100%;
    height: 16px;
    padding-left: 1px;
    appearance: none;
}
.combo::after {
    content: "";
    position: absolute;
    right: 4px;
    top: 6px;
    border: 3px solid transparent;
    border-top: 4px solid #aaa;
    border-bottom: none;
    pointer-events: none;
}
.combo::before {
    content: "";
    position: absolute;
    right: 13px;
    top: 0;
    bottom: 0;
    width: 1px;
    background: #4a4a4a;
    pointer-events: none;
}
.method {
    width: 66px;
}
.analysis {
    width: 90px;
}
.analysis select {
    padding-left: 2px;
}
.list .group {
    gap: 1px;
    padding: 0 2px;
}
.list .group button {
    gap: 2px;
    padding: 0 1px;
}
.list .group .more {
    margin-left: 2px;
    padding: 0 3px;
}

/* Chart */
.chart {
    position: relative;
    flex: 1;
    min-height: 0;
    background: #1c1c1e;
}
.plot {
    width: 100%;
    height: 100%;
}
.plot text {
    text-anchor: middle;
    fill: #a8a8a8;
}
.plot .chart-title {
    font-size: 13px;
}
.plot .axis {
    font-size: 8px;
}
.plot .axis-title {
    font-weight: bold;
}
.plot .y-axis text {
    text-anchor: end;
}
.plot .pick-labels text {
    fill: #14601a;
}
.curves polyline {
    fill: none;
    stroke-width: 3;
    stroke-linejoin: round;
}
.curves .s1 {
    stroke: #f00;
    stroke-width: 4;
}
.curves .s2 {
    stroke: #757575;
}
.picks path {
    fill: none;
}
.legend {
    position: absolute;
    left: 0;
    top: 24px;
    width: 144px;
    padding: 4px 0 3px 8px;
    background: #1c2a34;
}
.legend label {
    display: flex;
    align-items: center;
    height: 11px;
    color: #fff;
    font-weight: bold;
}
.legend input {
    appearance: none;
    width: 9px;
    height: 9px;
    background: #fff;
}
.legend input:checked::after {
    content: "";
    display: block;
    width: 3px;
    height: 6px;
    margin-left: 3px;
    border: solid #000;
    border-width: 0 1px 1px 0;
    rotate: 40deg;
}
.legend i {
    width: 25px;
    height: 1px;
    margin: 0 4px 0 5px;
    background: #858585;
}
.legend .red {
    background: #f00;
}

/* 3D view */
.side {
    flex: 0 0 300px;
    display: flex;
    flex-direction: column;
}
.shape, .list {
    flex: 1 1 0;
    padding: 0 2px;
}
.viewport {
    position: relative;
    flex: 1;
    min-height: 0;
    margin: 1px 0;
    border: 1px solid #777;
    background: #2d2d2d;
}
.scene {
    width: 100%;
    height: 100%;
    fill: #e0e0e0;
    font-size: 24px;
}
.scene .shape-name {
    font: 33px "DejaVu Sans", sans-serif;
    fill: #fff;
}
.compass {
    font: bold 30px "Liberation Sans", sans-serif;
    fill: #999;
}
.compass .far {
    font-size: 18px;
}
.cube-text {
    font: bold 17px "Liberation Sans", sans-serif;
    fill: #222;
}
.cube-text .small {
    font-size: 13px;
}
.triad {
    font: 24px "Liberation Sans", sans-serif;
    fill: #bbb;
}
.view-tools {
    position: absolute;
    top: 3px;
    left: 45px;
    display: flex;
    align-items: center;
    gap: 9px;
    color: #999;
}
.view-tools svg {
    width: 16px;
    height: 16px;
}
.view-tools i {
    width: 1px;
    height: 10px;
    margin: 0 -2px 0 -1px;
    background: #888;
}
.view-tools .stop svg {
    width: 22px;
    height: 22px;
}

/* Data grids */
table {
    width: 100%;
    border-collapse: collapse;
    table-layout: fixed;
    font: 8px/10px "Noto Sans", sans-serif;
}
td, th {
    height: 15px;
    padding: 0 0 0 1px;
    border: 1px solid #474747;
    font-weight: normal;
    text-align: left;
    white-space: nowrap;
    overflow: hidden;
}
.modes-box {
    flex: 1;
    min-height: 0;
    margin-bottom: 2px;
    border: 1px solid #525252;
    background: #2d2d2d;
}
.modes {
    height: 138px;
    margin-top: -1px;
}
.modes th {
    text-align: center;
}
.modes td:first-child, .modes th:first-child {
    border-left: none;
}
.c-mark {
    width: 15px;
}
.c-mode {
    width: 33px;
}
.c-picked {
    width: 59px;
}
.c-calc {
    width: 94px;
}
.modes svg {
    width: 7px;
    height: 7px;
    margin-left: 2px;
}
.method td, .cat th {
    background: #3b3b3b;
    color: #2f8ad8;
}
.modes .method {
    width: auto;
}
.modes .method svg, .cat svg {
    display: inline-block;
    width: 7px;
    height: 7px;
    margin: 0 6px 0 3px;
    vertical-align: middle;
}
.selected td {
    background: #106ebe;
}
.selected td:nth-child(3) {
    outline: 1px solid #fff;
    outline-offset: -1px;
}

/* Properties */
.properties {
    flex: 0 0 167px;
    min-width: 0;
    display: flex;
    flex-direction: column;
    min-height: 0;
    padding: 0 3px 0 2px;
    border: 1px solid #525252;
}
.prop-tools {
    display: flex;
    gap: 3px;
    height: 17px;
    margin-top: 2px;
}
.prop-tools button, .search {
    height: 16px;
    border: 1px solid #525252;
}
.az {
    width: 17px;
    justify-content: center;
    color: #999;
}
.prop-tools .cats {
    width: 17px;
    justify-content: center;
    border-color: #106ebe;
    background: #106ebe;
    color: #fff;
}
.cats svg {
    width: 9px;
    height: 9px;
}
.search {
    flex: 1;
    min-width: 0;
    display: flex;
    align-items: center;
    padding-right: 3px;
    background: #2d2d2d;
}
.search input {
    flex: 1;
    width: 0;
    min-width: 0;
}
.search svg {
    width: 8px;
    height: 8px;
    color: #aaa;
}
.bolt {
    width: 26px;
    justify-content: center;
    gap: 3px;
    color: #fff;
}
.bolt svg {
    width: 9px;
    height: 12px;
}
.bolt .arrow {
    width: 6px;
    height: 6px;
}
.grid {
    flex: 1;
    min-height: 0;
    display: flex;
    background: #2d2d2d;
}
.props {
    flex: 1;
    min-width: 0;
    height: 100%;
}
.cat svg {
    margin: 0 7px 0 3px;
}
.c-exp {
    width: 16px;
}
.c-name {
    width: 66px;
}
.props input {
    display: block;
    appearance: none;
    width: 11px;
    height: 11px;
    border: 1px solid #999;
}
.props input:checked::after {
    content: "";
    display: block;
    width: 3px;
    height: 6px;
    margin-left: 3px;
    border: solid #ccc;
    border-width: 0 1px 1px 0;
    rotate: 45deg;
}
.scroll {
    display: flex;
    flex-direction: column;
    align-items: center;
    width: 11px;
    border: 1px solid #4a4a4a;
    background: #3b3b3b;
}
.scroll i {
    flex: 1;
    width: 100%;
    margin-bottom: 26px;
    border: solid #525252;
    border-width: 1px 0;
}
.scroll svg {
    width: 7px;
    height: 10px;
}
.description {
    flex: none;
    height: 54px;
    border: 1px solid #525252;
    background: #2d2d2d;
}
.bottom-tabs {
    display: flex;
    gap: 4px;
    height: 17px;
    margin: 0 -3px 0 -2px;
}
.bottom-tabs a {
    flex: 1;
    padding-left: 1px;
    line-height: 17px;
    font-family: "Noto Sans", sans-serif;
    white-space: nowrap;
}
.bottom-tabs .active {
    background: #2d2d2d;
    color: #2f8ad8;
}

/* Status bar */
.status {
    display: flex;
    align-items: center;
    height: 16px;
    padding: 0 1px 0 4px;
    background: #3b3b3b;
}
.status span + span {
    margin-left: 5px;
    padding-left: 4px;
    border-left: 1px solid #525252;
}
.resize {
    align-self: flex-end;
    width: 9px;
    height: 9px;
    margin-left: auto;
}
.pointer {
    position: absolute;
    left: 867px;
    top: 109px;
    width: 8px;
    height: 13px;
}
```
